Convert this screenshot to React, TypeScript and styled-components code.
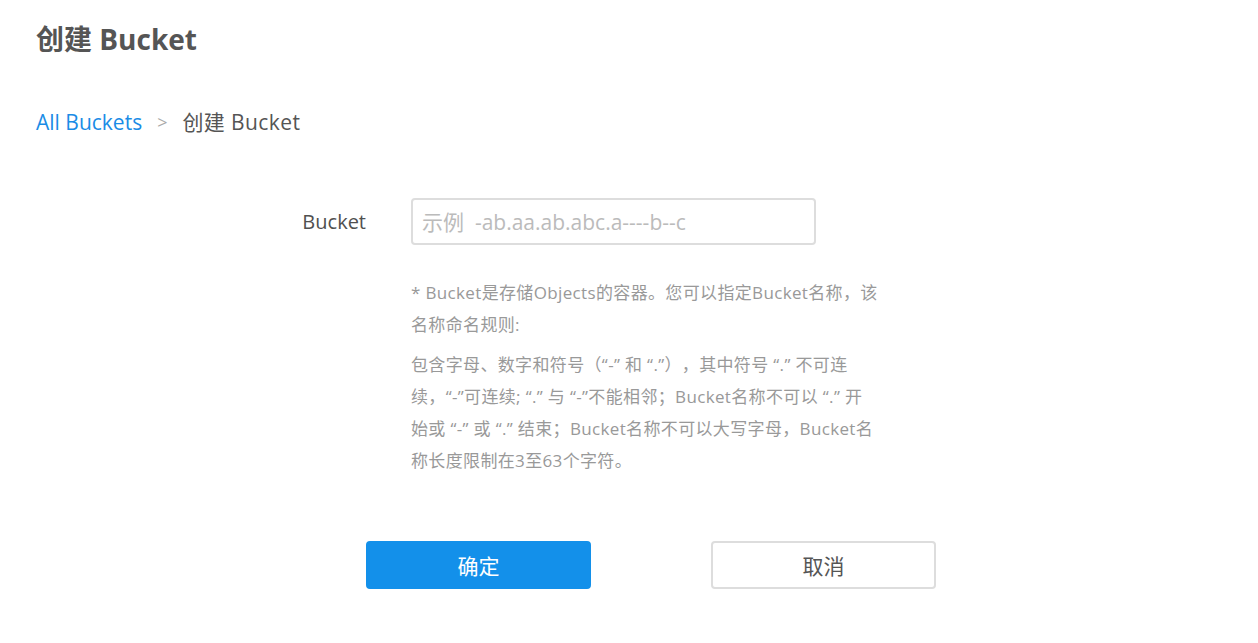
import React from "react";
import styled, { createGlobalStyle } from "styled-components";

const Global = createGlobalStyle`
  html, body { margin: 0; padding: 0; background: #fff; }
  body {
    font-family: "Open Sans", "Noto Sans CJK SC", sans-serif;
    text-spacing-trim: space-all;
  }
  * { box-sizing: border-box; }
`;

const Page = styled.div`
  padding: 19px 36px 0;
`;

const Title = styled.h1`
  margin: 0;
  font-size: 28px;
  line-height: 40px;
  font-weight: 700;
  color: #555;
`;

const Breadcrumb = styled.nav`
  margin-top: 48px;
  display: flex;
  align-items: center;
  font-size: 21px;
  line-height: 30px;
  color: #555;
`;

const Crumb = styled.a`
  color: #1a8ce6;
  text-decoration: none;
`;

const Sep = styled.span`
  color: #aaa;
  margin: 0 15px 0 15px;
  font-size: 18px;
`;

const Current = styled.span`
  letter-spacing: 0.4px;
`;

const Form = styled.div`
  margin-top: 61px;
  display: grid;
  grid-template-columns: 330px 405px;
  column-gap: 45px;
  align-items: center;
`;

const Label = styled.label`
  text-align: right;
  font-size: 20px;
  color: #505050;
`;

const Input = styled.input`
  height: 47px;
  width: 405px;
  border: 2px solid #ddd;
  border-radius: 4px;
  padding: 0 9px;
  font-family: inherit;
  font-size: 21px;
  color: #555;
  outline: none;
  &::placeholder { color: #bbb; }
`;

const Help = styled.div`
  grid-column: 2;
  width: 520px;
  margin-top: 32px;
  font-size: 17px;
  line-height: 32px;
  letter-spacing: 0.35px;
  color: #999;
`;

const HelpPara = styled.p`
  margin: 0 0 8px;
  &:last-child { margin-bottom: 0; }
`;

const Actions = styled.div`
  margin-top: 64px;
  margin-left: 330px;
  display: flex;
  gap: 120px;
`;

const Button = styled.button<{ $primary?: boolean }>`
  width: 225px;
  height: 48px;
  border-radius: 4px;
  font-family: inherit;
  font-size: 21px;
  cursor: pointer;
  background: ${(p) => (p.$primary ? "#1390ea" : "#fff")};
  color: ${(p) => (p.$primary ? "#fff" : "#555")};
  border: 2px solid ${(p) => (p.$primary ? "#1390ea" : "#ddd")};
`;

export default function App() {
  return (
    <>
      <Global />
      <Page>
        <Title>创建 Bucket</Title>
        <Breadcrumb>
          <Crumb href="#">All Buckets</Crumb>
          <Sep>&gt;</Sep>
          <Current>创建 Bucket</Current>
        </Breadcrumb>
        <Form>
          <Label>Bucket</Label>
          <Input placeholder="示例  -ab.aa.ab.abc.a----b--c" />
          <Help>
            <HelpPara>
              * Bucket是存储Objects的容器。您可以指定Bucket名称，该
              <br />
              名称命名规则:
            </HelpPara>
            <HelpPara>
              包含字母、数字和符号（“-” 和 “.”），其中符号 “.” 不可连
              <br />
              续，“-”可连续; “.” 与 “-”不能相邻；Bucket名称不可以 “.” 开
              <br />
              始或 “-” 或 “.” 结束；Bucket名称不可以大写字母，Bucket名
              <br />
              称长度限制在3至63个字符。
            </HelpPara>
          </Help>
        </Form>
        <Actions>
          <Button $primary>确定</Button>
          <Button>取消</Button>
        </Actions>
      </Page>
    </>
  );
}
